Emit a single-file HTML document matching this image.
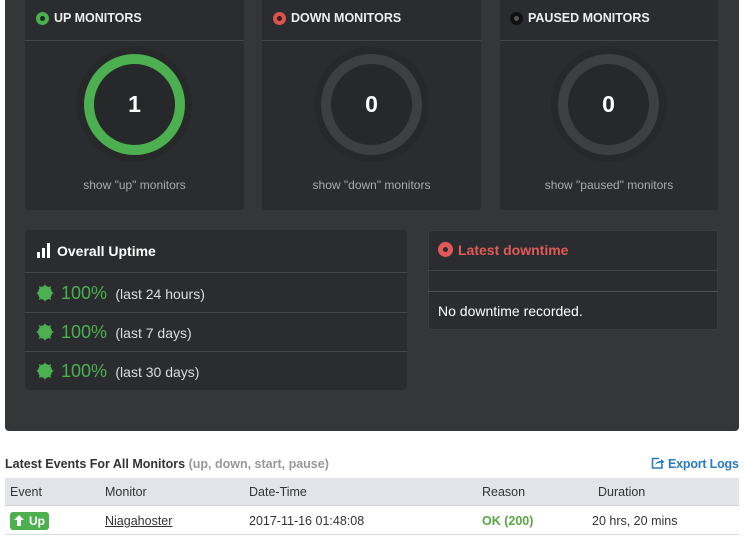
<!DOCTYPE html>
<html><head><meta charset="utf-8"><style>
*{margin:0;padding:0;box-sizing:border-box}
body{width:745px;height:537px;background:#fff;font-family:"Liberation Sans",Arial,sans-serif;position:relative;overflow:hidden}
.a{position:absolute}
.panel{left:5px;top:-5px;width:734px;height:436px;background:#343638;border-radius:4px}
.card{background:#2a2c2f;border-radius:3px}
.ht{color:#eee;font-weight:bold;font-size:12.5px}
.line{height:1px;background:#44474a}
.ring{border-radius:50%}
.num{color:#fff;font-weight:bold;font-size:23px;text-align:center}
.show{color:#aaa;font-size:12px;text-align:center}
.row{color:#ddd;font-size:14px}
.pct{color:#4caf50;font-size:18px}
</style></head><body>
<div class="a panel"></div>

<div class="a card" style="left:25px;top:-5px;width:219px;height:215px"></div>
<div class="a card" style="left:262px;top:-5px;width:219px;height:215px"></div>
<div class="a card" style="left:500px;top:-5px;width:218px;height:215px"></div>
<div class="a line" style="left:25px;top:40px;width:219px"></div>
<div class="a line" style="left:262px;top:40px;width:219px"></div>
<div class="a line" style="left:500px;top:40px;width:218px"></div>

<div class="a ring" style="left:36px;top:12px;width:13px;height:13px;background:#4caf50"><div class="a ring" style="left:4px;top:4px;width:5px;height:5px;background:#1d2b1d"></div></div>
<div class="a ht" style="left:54px;top:11px">UP MONITORS</div>
<div class="a ring" style="left:273px;top:12px;width:13px;height:13px;background:#d9534f"><div class="a ring" style="left:4px;top:4px;width:5px;height:5px;background:#3a1e1e"></div></div>
<div class="a ht" style="left:291px;top:11px">DOWN MONITORS</div>
<div class="a ring" style="left:510px;top:12px;width:13px;height:13px;background:#111"><div class="a ring" style="left:4px;top:4px;width:5px;height:5px;background:#555"></div></div>
<div class="a ht" style="left:528px;top:11px">PAUSED MONITORS</div>

<div class="a ring" style="left:77px;top:47px;width:115px;height:115px;background:#262829"></div>
<div class="a ring" style="left:84px;top:54px;width:101px;height:101px;border:10px solid #4caf50"></div>
<div class="a num" style="left:84px;top:91px;width:101px">1</div>
<div class="a ring" style="left:314px;top:47px;width:115px;height:115px;background:#262829"></div>
<div class="a ring" style="left:321px;top:54px;width:101px;height:101px;border:10px solid #3d3f42"></div>
<div class="a num" style="left:321px;top:91px;width:101px">0</div>
<div class="a ring" style="left:551px;top:47px;width:115px;height:115px;background:#262829"></div>
<div class="a ring" style="left:558px;top:54px;width:101px;height:101px;border:10px solid #3d3f42"></div>
<div class="a num" style="left:558px;top:91px;width:101px">0</div>

<div class="a show" style="left:25px;top:178px;width:219px">show "up" monitors</div>
<div class="a show" style="left:262px;top:178px;width:219px">show "down" monitors</div>
<div class="a show" style="left:500px;top:178px;width:218px">show "paused" monitors</div>

<div class="a card" style="left:25px;top:230px;width:382px;height:160px"></div>
<div class="a line" style="left:25px;top:272px;width:382px"></div>
<div class="a line" style="left:25px;top:312px;width:382px"></div>
<div class="a line" style="left:25px;top:351px;width:382px"></div>
<svg class="a" style="left:36px;top:243px" width="15" height="15"><rect x="1" y="9" width="3" height="6" fill="#fff"/><rect x="6" y="5" width="3" height="10" fill="#fff"/><rect x="11" y="0" width="3" height="15" fill="#fff"/></svg>
<div class="a" style="left:57px;top:243px;color:#fff;font-weight:bold;font-size:14px">Overall Uptime</div>
<svg class="a" style="left:36px;top:284px" width="18" height="18"><g fill="#4caf50"><circle cx="9" cy="9" r="7"/><polygon points="9,0 11,4 15,2 14,7 18,9 14,11 15,16 11,14 9,18 7,14 3,16 4,11 0,9 4,7 3,2 7,4"/></g></svg>
<svg class="a" style="left:36px;top:323px" width="18" height="18"><g fill="#4caf50"><circle cx="9" cy="9" r="7"/><polygon points="9,0 11,4 15,2 14,7 18,9 14,11 15,16 11,14 9,18 7,14 3,16 4,11 0,9 4,7 3,2 7,4"/></g></svg>
<svg class="a" style="left:36px;top:362px" width="18" height="18"><g fill="#4caf50"><circle cx="9" cy="9" r="7"/><polygon points="9,0 11,4 15,2 14,7 18,9 14,11 15,16 11,14 9,18 7,14 3,16 4,11 0,9 4,7 3,2 7,4"/></g></svg>
<div class="a" style="left:61px;top:283px"><span class="pct">100%</span> <span class="row">&nbsp;(last 24 hours)</span></div>
<div class="a" style="left:61px;top:322px"><span class="pct">100%</span> <span class="row">&nbsp;(last 7 days)</span></div>
<div class="a" style="left:61px;top:361px"><span class="pct">100%</span> <span class="row">&nbsp;(last 30 days)</span></div>

<div class="a card" style="left:428px;top:230px;width:290px;height:100px;border:1px solid #3a3d40"></div>
<div class="a line" style="left:428px;top:270px;width:290px"></div>
<div class="a line" style="left:428px;top:291px;width:290px;background:#505356"></div>
<div class="a ring" style="left:438px;top:242px;width:15px;height:15px;background:#e05a5a"><div class="a ring" style="left:5px;top:5px;width:5px;height:5px;background:#2a2c2f"></div></div>
<div class="a" style="left:458px;top:242px;color:#e05a5a;font-weight:bold;font-size:14px">Latest downtime</div>
<div class="a" style="left:438px;top:303px;color:#fff;font-size:14px">No downtime recorded.</div>

<div class="a" style="left:5px;top:457px;font-size:12.5px;color:#333;font-weight:bold">Latest Events For All Monitors <span style="color:#999">(up, down, start, pause)</span></div>
<svg class="a" style="left:651px;top:457px" width="14" height="12"><path d="M8 1.5H1.5V11H11V7" fill="none" stroke="#2a7bc1" stroke-width="1.6"/><path d="M4 8C5 5 7 4 10 4V2L13.5 4.8 10 7.5V5.8C7.5 5.8 5.5 6.5 4 8Z" fill="#2a7bc1"/></svg>
<div class="a" style="left:668px;top:457px;font-size:12.5px;color:#2a7bc1;font-weight:bold;letter-spacing:-0.2px">Export Logs</div>
<div class="a" style="left:5px;top:478px;width:734px;height:28px;background:#e2e4ea;border-bottom:1px solid #d0d3d8"></div>
<div class="a" style="left:5px;top:534px;width:734px;height:1px;background:#ddd"></div>
<div class="a" style="top:485px;left:10px;font-size:12.5px;color:#333">Event</div>
<div class="a" style="top:485px;left:105px;font-size:12.5px;color:#333">Monitor</div>
<div class="a" style="top:485px;left:249px;font-size:12.5px;color:#333">Date-Time</div>
<div class="a" style="top:485px;left:482px;font-size:12.5px;color:#333">Reason</div>
<div class="a" style="top:485px;left:598px;font-size:12.5px;color:#333">Duration</div>
<div class="a" style="left:10px;top:512px;width:39px;height:18px;background:#4caf50;border-radius:3px"></div>
<svg class="a" style="left:14px;top:515px" width="10" height="11"><path d="M5 0L10 5H7V11H3V5H0Z" fill="#fff"/></svg>
<div class="a" style="left:29px;top:514px;color:#fff;font-size:12px;font-weight:bold">Up</div>
<div class="a" style="top:514px;left:105px;font-size:12.5px;color:#333;text-decoration:underline">Niagahoster</div>
<div class="a" style="top:514px;left:249px;font-size:12.5px;color:#333">2017-11-16 01:48:08</div>
<div class="a" style="top:514px;left:482px;font-size:12.5px;color:#5aa545;font-weight:bold">OK (200)</div>
<div class="a" style="top:514px;left:592px;font-size:12.5px;color:#333">20 hrs, 20 mins</div>
</body></html>
